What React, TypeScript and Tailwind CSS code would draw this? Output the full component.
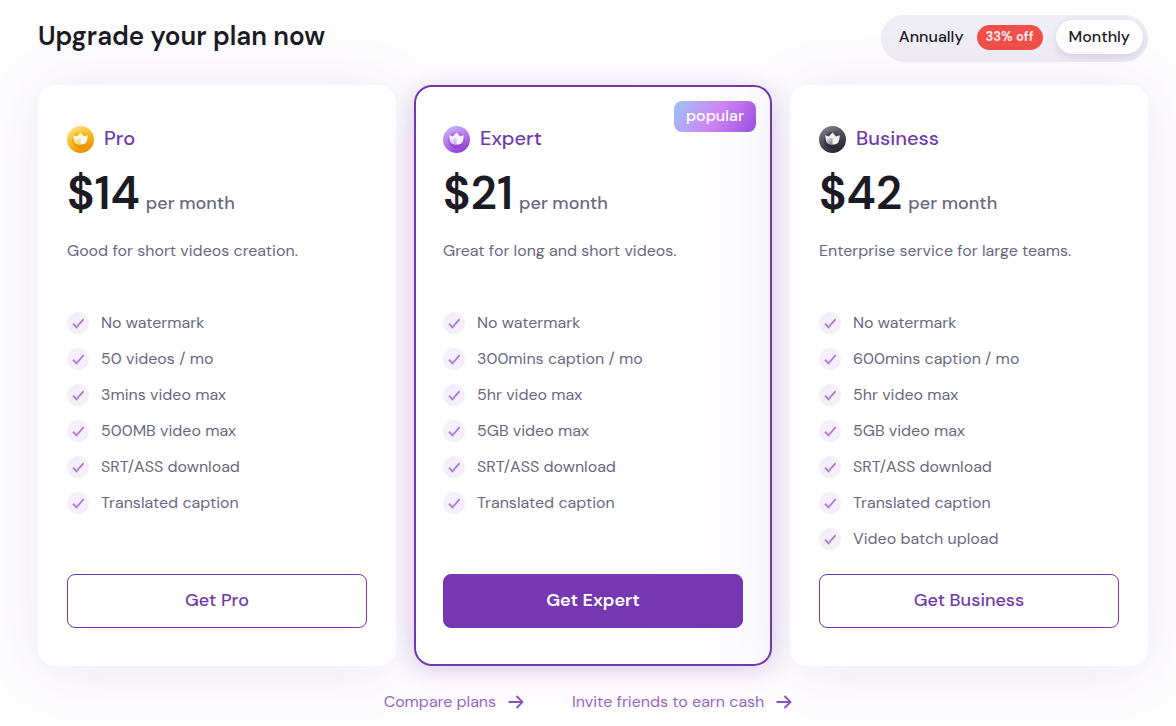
import React, { useState } from "react"
import clsx from "clsx"

interface IPlan {
  name: string
  price: number
  description: string
  features: string[]
  coin: string[]
  popular?: boolean
}

const plans: IPlan[] = [
  {
    name: "Pro",
    price: 14,
    description: "Good for short videos creation.",
    features: [
      "No watermark",
      "50 videos / mo",
      "3mins video max",
      "500MB video max",
      "SRT/ASS download",
      "Translated caption",
    ],
    coin: ["#ffe08a", "#fbbc1c", "#e58a00"],
  },
  {
    name: "Expert",
    price: 21,
    description: "Great for long and short videos.",
    features: [
      "No watermark",
      "300mins caption / mo",
      "5hr video max",
      "5GB video max",
      "SRT/ASS download",
      "Translated caption",
    ],
    coin: ["#c5b8f8", "#b67ae8", "#8d3ccf"],
    popular: true,
  },
  {
    name: "Business",
    price: 42,
    description: "Enterprise service for large teams.",
    features: [
      "No watermark",
      "600mins caption / mo",
      "5hr video max",
      "5GB video max",
      "SRT/ASS download",
      "Translated caption",
      "Video batch upload",
    ],
    coin: ["#85858f", "#4b4a55", "#24232c"],
  },
]

const CrownCoin = ({ id, colors }: { id: string; colors: string[] }) => (
  <svg className="size-[27px] shrink-0" viewBox="0 0 27 27" aria-hidden="true">
    <defs>
      <linearGradient id={`${id}-coin`} x1="0.2" y1="0" x2="0.7" y2="1">
        <stop offset="0" stopColor={colors[0]} />
        <stop offset="0.5" stopColor={colors[1]} />
        <stop offset="1" stopColor={colors[2]} />
      </linearGradient>
      <linearGradient id={`${id}-inner`} x1="0" y1="0" x2="0" y2="1">
        <stop offset="0" stopColor={colors[1]} />
        <stop offset="1" stopColor={colors[2]} />
      </linearGradient>
      <linearGradient id={`${id}-shade`} x1="0" y1="0" x2="1" y2="1">
        <stop offset="0" stopColor={colors[1]} stopOpacity="0" />
        <stop offset="1" stopColor={colors[1]} stopOpacity="0.7" />
      </linearGradient>
    </defs>
    <circle cx="13.5" cy="13.5" r="13.5" fill={`url(#${id}-coin)`} />
    <circle cx="13.5" cy="14" r="8.5" fill={`url(#${id}-inner)`} opacity="0.8" />
    <path
      d="M6.3 9.3l3.6 1.3 3.6-4 3.6 4 3.6-1.3c0 3-.5 5.2-1.3 7-.9 1.4-3.2 2.3-5.9 2.3s-5-.9-5.9-2.3c-.8-1.8-1.3-4-1.3-7z"
      fill="#fff"
      opacity="0.93"
    />
    <path d="M7 13l6.5-1.2v6.8c-2.7 0-5-.9-5.9-2.3-.3-1-.5-2-.6-3.3z" fill={`url(#${id}-shade)`} />
  </svg>
)

const CheckIcon = () => (
  <svg className="size-[22px] shrink-0" viewBox="0 0 22 22" fill="none" aria-hidden="true">
    <circle cx="11" cy="11" r="11" fill="#f5effb" />
    <path d="M6 11.6l3.4 3.8 7.2-8.2" stroke="#ab80d3" strokeWidth="1.9" />
  </svg>
)

const ArrowIcon = () => (
  <svg className="h-3.5 w-4" viewBox="0 0 16 14" fill="none" aria-hidden="true">
    <path d="M0.5 7h14M8.5 1l6 6-6 6" stroke="#8b52bd" strokeWidth="1.8" />
  </svg>
)

const PlanCard = ({ plan }: { plan: IPlan }) => (
  <article
    className={clsx(
      "relative flex flex-col rounded-[18px] border-2 px-[27px] pt-[37px] pb-9",
      plan.popular
        ? "border-[#713aac] bg-linear-to-r from-white from-60% to-[#fbfafd] shadow-[0_4px_24px_rgba(136,60,200,0.28)]"
        : "border-white bg-white shadow-[0_4px_60px_rgba(70,50,130,0.1)]"
    )}
  >
    {plan.popular && (
      <span className="absolute right-3.5 top-3.5 flex h-[31px] w-[82px] items-center justify-center rounded-lg bg-[linear-gradient(120deg,#9bc5f4,#cf85f4_50%,#9b50e0)] pb-0.5 text-base font-medium text-white">
        popular
      </span>
    )}

    <div className="flex h-[30px] items-center gap-x-2.5">
      <CrownCoin id={plan.name} colors={plan.coin} />
      <h2 className="pb-0.5 text-xl font-medium text-[#713aac]">{plan.name}</h2>
    </div>

    <p className="mt-3 flex h-[54px] items-baseline gap-x-1.5 leading-[54px] text-[#1c1b25]">
      <span className="text-[46px] font-semibold">${plan.price}</span>
      <span className="text-lg leading-[54px] font-medium text-[#6a6880]">per month</span>
    </p>
    <p className="mt-[19px] text-base">{plan.description}</p>

    <ul className="mt-12 mb-[23px] flex flex-col gap-y-3">
      {plan.features.map((feature) => (
        <li key={feature} className="flex h-6 items-center gap-x-3 text-base">
          <CheckIcon />
          {feature}
        </li>
      ))}
    </ul>

    <button
      type="button"
      className={clsx(
        "mt-auto h-[54px] w-full rounded-lg border border-[#7638b0] pb-0.5 text-lg duration-300",
        plan.popular
          ? "bg-[#7638b0] font-semibold text-white hover:bg-[#642e98]"
          : "bg-white font-medium text-[#713aac] hover:bg-[#f4edfb]"
      )}
    >
      Get {plan.name}
    </button>
  </article>
)

const App = () => {
  const [billing, setBilling] = useState("monthly")

  const pill = (active: boolean) =>
    clsx(
      "flex h-[34px] items-center rounded-full px-[13px] duration-300",
      active && "bg-white shadow-[0_3px_8px_rgba(60,50,110,0.14)]"
    )

  return (
    <main className="min-h-screen bg-[#fefdfe] pt-[15px] font-['DM_Sans',Inter,sans-serif] text-[#6a6880]">
      <header className="flex h-[47px] items-center justify-between pr-7 pl-[38px]">
        <h1 className="pb-1 text-[26px] font-semibold text-[#1c1b25]">Upgrade your plan now</h1>
        <div className="flex h-full items-center rounded-full bg-[#efedf5] px-[5px] pb-[3px] text-base font-medium text-[#1c1b25]">
          <button
            type="button"
            aria-pressed={billing === "annually"}
            onClick={() => setBilling("annually")}
            className={pill(billing === "annually")}
          >
            Annually
          </button>
          <span className="mr-[13px] flex h-[25px] w-[66px] items-center justify-center rounded-full bg-[#f04f4a] text-[13px] font-bold text-[#ffe9ec]">
            33% off
          </span>
          <button
            type="button"
            aria-pressed={billing === "monthly"}
            onClick={() => setBilling("monthly")}
            className={pill(billing === "monthly")}
          >
            Monthly
          </button>
        </div>
      </header>

      <section className="mt-[23px] grid grid-cols-3 gap-x-[18px] pr-7 pl-[38px]">
        {plans.map((plan) => (
          <PlanCard key={plan.name} plan={plan} />
        ))}
      </section>

      <footer className="mt-6 flex justify-center gap-x-12 text-base text-[#9665c4]">
        <a href="#compare" className="flex items-center gap-x-3">
          Compare plans
          <ArrowIcon />
        </a>
        <a href="#invite" className="flex items-center gap-x-3">
          Invite friends to earn cash
          <ArrowIcon />
        </a>
      </footer>
    </main>
  )
}

export default App
